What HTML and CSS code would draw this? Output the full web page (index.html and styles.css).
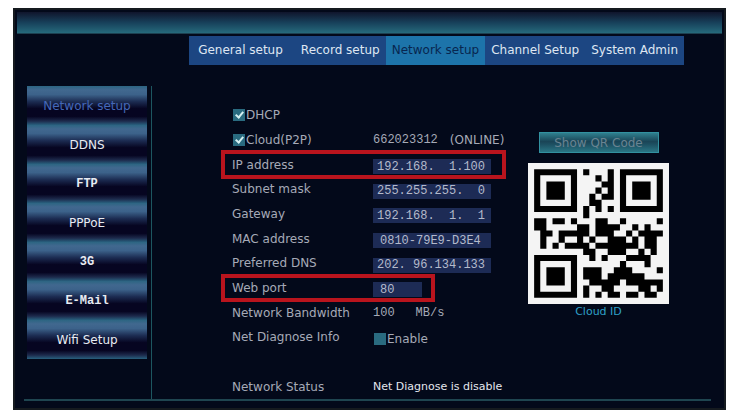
FILE: index.html
```html
<!DOCTYPE html>
<html lang="en">
<head>
    <meta charset="UTF-8">
    <meta name="viewport" content="width=device-width, initial-scale=1.0">
    <title>Network setup</title>
    <link rel="stylesheet" href="styles.css">
</head>
<body>
    <div class="screen">
        <div class="title-bar"></div>
        <nav class="tabs">
            <a href="#general">General setup</a>
            <a href="#record">Record setup</a>
            <a href="#network" class="active">Network setup</a>
            <a href="#channel">Channel Setup</a>
            <a href="#system">System Admin</a>
        </nav>
        <div class="content">
            <div class="sidebar">
                <button class="active">Network setup</button>
                <button>DDNS</button>
                <button class="mono">FTP</button>
                <button>PPPoE</button>
                <button class="mono">3G</button>
                <button class="mono">E-Mail</button>
                <button>Wifi Setup</button>
            </div>
            <form class="settings">
                <div class="row">
                    <label class="check"><input type="checkbox" checked>DHCP</label>
                </div>
                <div class="row">
                    <label class="check"><input type="checkbox" checked>Cloud(P2P)</label>
                    <div class="value"><span class="mono">662023312</span><span>(ONLINE)</span></div>
                </div>
                <div class="row highlight">
                    <label for="ip">IP address</label>
                    <input type="text" id="ip" class="field" value="192.168.  1.100">
                </div>
                <div class="row">
                    <label for="mask">Subnet mask</label>
                    <input type="text" id="mask" class="field" value="255.255.255.  0">
                </div>
                <div class="row">
                    <label for="gateway">Gateway</label>
                    <input type="text" id="gateway" class="field" value="192.168.  1.  1">
                </div>
                <div class="row">
                    <label for="mac">MAC address</label>
                    <input type="text" id="mac" class="field indent" value="0810-79E9-D3E4">
                </div>
                <div class="row">
                    <label for="dns">Preferred DNS</label>
                    <input type="text" id="dns" class="field" value="202. 96.134.133">
                </div>
                <div class="row highlight short">
                    <label for="port">Web port</label>
                    <input type="text" id="port" class="field indent small" value="80">
                </div>
                <div class="row">
                    <span>Network Bandwidth</span>
                    <div class="value mono"><span>100</span><span class="unit">MB/s</span></div>
                </div>
                <div class="row">
                    <span>Net Diagnose Info</span>
                    <label class="check enable"><input type="checkbox">Enable</label>
                </div>
                <div class="row"></div>
                <div class="row">
                    <span>Network Status</span>
                    <span class="status">Net Diagnose is disable</span>
                </div>
            </form>
            <div class="cloud">
                <button class="qr-btn">Show QR Code</button>
                <svg class="qr" viewBox="-1 -1 23 23" role="img" aria-label="Cloud ID QR code">
                    <path id="qrPath" fill="#000"></path>
                </svg>
                <div class="cloud-id">Cloud ID</div>
            </div>
        </div>
    </div>

    <script>
        const rows = [
            '#######.#...#.#######',
            '#.....#...#.#.#.....#',
            '#.###.#....##.#.###.#',
            '#.###.#...#.#.#.###.#',
            '#.###.#..#.##.#.###.#',
            '#.....#..##...#.....#',
            '#######.#.#.#.#######',
            '........#............',
            '##.##.#...##..#.....#',
            '##.....##.####..#.#..',
            '.##.#####.###..#.####',
            '.#..#..#.#..###.#.##.',
            '.#.#.####.#######.##.',
            '........##..###..#.#.',
            '#######..#.#...####..',
            '#.....#.......#...#..',
            '#.###.#.###..###....#',
            '#.###.#.###.######...',
            '#.###.#..#####.######',
            '#.....#.#..##....##.#',
            '#######.#.#.##.##.##.'
        ];

        let d = '';
        rows.forEach((row, y) => {
            for (const run of row.matchAll(/#+/g)) {
                d += `M${run.index} ${y}h${run[0].length}v1h-${run[0].length}z`;
            }
        });
        document.getElementById('qrPath').setAttribute('d', d);
    </script>
</body>
</html>
```
FILE: styles.css
```css
*, *::before, *::after {
    box-sizing: border-box;
}

body {
    margin: 0;
    padding: 8px 13px;
    min-height: 100vh;
    display: flex;
    background: #fff;
    font-family: "DejaVu Sans", Verdana, sans-serif;
    font-size: 12px;
    line-height: 14px;
    color: #a6aab7;
}

button, input {
    font: inherit;
    color: inherit;
    margin: 0;
    border: none;
    border-radius: 0;
}

.mono, .field {
    font-family: "Liberation Mono", "Courier New", monospace;
}

.screen {
    flex: 1;
    display: flex;
    flex-direction: column;
    background: #03091a;
    border: 2px solid #151a1f;
    padding: 2px;
}

.title-bar {
    height: 22px;
    background: linear-gradient(#10152c, #17405a 50%, #266a7c);
    border-bottom: 1px solid #1d4050;
}

.tabs {
    display: flex;
    justify-content: flex-end;
    margin-top: 2px;
    padding-right: 38px;
}

.tabs a {
    padding: 7px 6px 8px;
    background: #1c4682;
    color: #dfe6f2;
    text-decoration: none;
}

.tabs a:first-child {
    padding-left: 9px;
    padding-right: 12px;
}

.tabs a.active {
    background: #1d74aa;
    color: #08264f;
}

.content {
    flex: 1;
    display: flex;
    margin: 21px 11px 5px 7px;
    padding-left: 3px;
    border-bottom: 2px solid #1f4550;
}

.sidebar {
    width: 125px;
    padding-right: 4px;
    border-right: 1px solid #1d5660;
}

.sidebar button {
    display: block;
    width: 120px;
    height: 39px;
    padding: 0;
    background: linear-gradient(#2c6582, #41688f 10%, #3c628a 22%, #1c2c52 40%, #060521 58%, #060521 78%, #1d2a4c 90%, #28607e);
    color: #e8ebf2;
    text-align: center;
    cursor: pointer;
}

.sidebar button.active {
    color: #4468b8;
}

.sidebar .mono {
    font-weight: bold;
}

.settings {
    flex: 1;
    display: grid;
    grid-auto-rows: 1fr;
    margin-left: 80px;
    padding-top: 17px;
}

.row {
    position: relative;
    display: grid;
    grid-template-columns: 141px 1fr;
    align-items: center;
}

.value {
    display: flex;
    gap: 12px;
}

.unit {
    margin-left: 9px;
}

.check {
    display: flex;
    align-items: center;
    gap: 1px;
}

.check input {
    appearance: none;
    width: 12px;
    height: 12px;
    margin-left: 1px;
    background: #2a6b80;
}

.check input:checked::before {
    content: "";
    display: block;
    width: 5px;
    height: 8px;
    margin: 1px 4px;
    border: solid #d5f0f2;
    border-width: 0 2px 2px 0;
    transform: rotate(40deg);
}

.enable {
    padding-top: 4px;
}

.field {
    width: 118px;
    height: 15px;
    margin-top: 4px;
    padding: 0 4px;
    background: #1d2b55;
    color: #b4bacb;
    outline: none;
}

.field.indent {
    padding-left: 7px;
}

.field.small {
    width: 49px;
}

/* red marker round the rows that have to be checked */
.highlight::after {
    content: "";
    position: absolute;
    top: -2px;
    bottom: -2px;
    left: -11px;
    width: 285px;
    border: 4px solid #b9141d;
    pointer-events: none;
}

.highlight.short::after {
    width: 214px;
}

.status {
    font-size: 11px;
    color: #e4e7ee;
}

.cloud {
    display: flex;
    flex-direction: column;
    align-items: center;
    width: 141px;
    margin-right: 42px;
    padding-top: 46px;
}

.qr-btn {
    width: 120px;
    height: 21px;
    padding: 0;
    background: linear-gradient(#2f7f8e, #1a4557 45%, #1d5062 60%, #2a7685);
    border: 1px solid #3291a0;
    color: #6a8492;
}

.qr {
    width: 141px;
    height: 141px;
    margin-top: 10px;
    background: #f4f4f4;
}

.cloud-id {
    margin-top: 1px;
    font-size: 11px;
    color: #2fa0c8;
}
```
